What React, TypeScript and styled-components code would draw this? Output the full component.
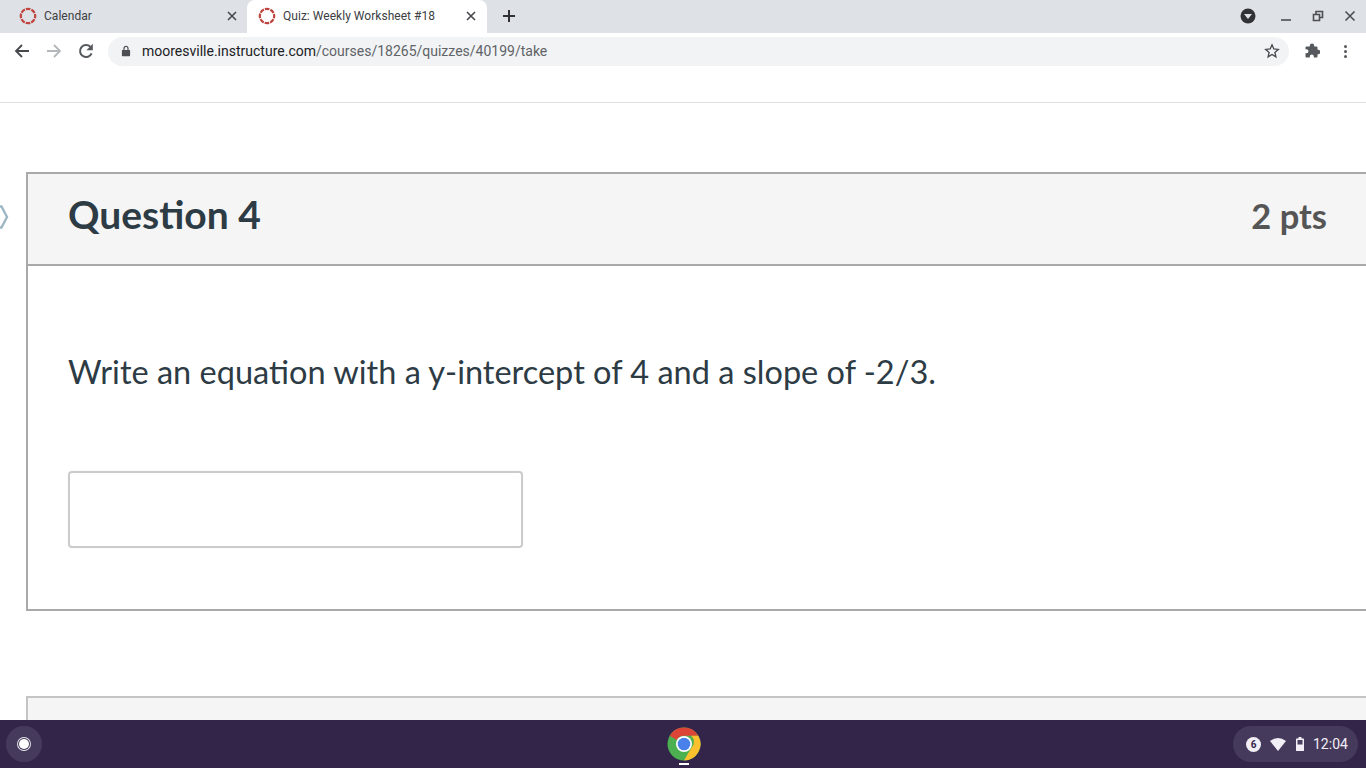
import React from 'react';
import styled, { createGlobalStyle } from 'styled-components';

const GlobalStyle = createGlobalStyle`
    html, body {
        margin: 0;
        padding: 0;
        height: 100%;
        overflow: hidden;
        background: #fff;
    }
`;

const CanvasLogo = () => (
    <svg width="18" height="18" viewBox="0 0 18 18">
        <circle cx="9" cy="9" r="7.200" fill="none" stroke="#c0433d" strokeWidth="2.200" strokeDasharray="4.600 1.050" strokeDashoffset="2.300" />
    </svg>
);

const CloseIcon = () => (
    <svg width="12" height="12" viewBox="0 0 12 12">
        <path d="M2 2l8 8M10 2l-8 8" stroke="#45484c" strokeWidth="1.600" fill="none" />
    </svg>
);

const ChromeLogo = () => (
    <svg width="34" height="34" viewBox="0 0 34 34">
        <circle cx="17" cy="17" r="16.500" fill="#4caf50" />
        <path d="M17 .5a16.500 16.500 0 0 1 14.300 8.250H17a8.250 8.250 0 0 0-7.150 4.130L2.700 8.750A16.500 16.500 0 0 1 17 .5z" fill="#db4437" />
        <path d="M31.300 8.750A16.500 16.500 0 0 1 17 33.500l7.150-12.370a8.250 8.250 0 0 0 0-12.380z" fill="#fbc02d" />
        <circle cx="17" cy="17" r="8" fill="#fff" />
        <circle cx="17" cy="17" r="6.300" fill="#4a80ea" />
    </svg>
);

const App = () => {
    return (
        <Screen>
            <GlobalStyle />
            <TabStrip>
                <Tab>
                    <CanvasLogo />
                    <TabTitle>Calendar</TabTitle>
                    <TabClose><CloseIcon /></TabClose>
                </Tab>
                <Tab $active>
                    <CanvasLogo />
                    <TabTitle>Quiz: Weekly Worksheet #18</TabTitle>
                    <TabClose><CloseIcon /></TabClose>
                </Tab>
                <NewTab>
                    <svg width="14" height="14" viewBox="0 0 14 14">
                        <path d="M7 1v12M1 7h12" stroke="#2f3134" strokeWidth="2" fill="none" />
                    </svg>
                </NewTab>
                <WindowControls>
                    <ProfileButton>
                        <svg width="16" height="16" viewBox="0 0 16 16">
                            <circle cx="8" cy="8" r="7.500" fill="#303236" />
                            <path d="M4 6h8l-4 5z" fill="#dee1e6" />
                        </svg>
                    </ProfileButton>
                    <WindowButton>
                        <svg width="12" height="12" viewBox="0 0 12 12">
                            <path d="M1 10h10" stroke="#4b4e52" strokeWidth="1.600" fill="none" />
                        </svg>
                    </WindowButton>
                    <WindowButton>
                        <svg width="12" height="12" viewBox="0 0 12 12">
                            <path d="M1.500 4.500h6v6h-6zM4 4.500V1.500h6.500v6H7.500" stroke="#4b4e52" strokeWidth="1.600" fill="none" />
                        </svg>
                    </WindowButton>
                    <WindowButton>
                        <svg width="12" height="12" viewBox="0 0 12 12">
                            <path d="M1.500 1.500l9 9M10.500 1.500l-9 9" stroke="#4b4e52" strokeWidth="1.600" fill="none" />
                        </svg>
                    </WindowButton>
                </WindowControls>
            </TabStrip>

            <Toolbar>
                <NavButton>
                    <svg width="16" height="16" viewBox="0 0 16 16">
                        <path d="M15 8H2M8 2L2 8l6 6" stroke="#45484c" strokeWidth="1.800" fill="none" />
                    </svg>
                </NavButton>
                <NavButton>
                    <svg width="16" height="16" viewBox="0 0 16 16">
                        <path d="M1 8h13M8 2l6 6-6 6" stroke="#b4b7bb" strokeWidth="1.800" fill="none" />
                    </svg>
                </NavButton>
                <NavButton>
                    <svg width="16" height="16" viewBox="0 0 16 16">
                        <path d="M13.600 10.300A6 6 0 1 1 12.300 3.800" stroke="#55585c" strokeWidth="2" fill="none" />
                        <path d="M14.800 .8v6.400H8.400z" fill="#55585c" />
                    </svg>
                </NavButton>
                <Omnibox>
                    <svg width="10" height="12" viewBox="0 0 10 12">
                        <path d="M1.500 5h7a.6.6 0 0 1 .6.6v5a.6.6 0 0 1-.6.6h-7a.6.6 0 0 1-.6-.6v-5a.6.6 0 0 1 .6-.6z" fill="#4b4e52" />
                        <path d="M3 5V3.400a2 2 0 0 1 4 0V5" stroke="#4b4e52" strokeWidth="1.200" fill="none" />
                    </svg>
                    <Url>
                        <UrlHost>mooresville.instructure.com</UrlHost>/courses/18265/quizzes/40199/take
                    </Url>
                    <StarIcon>
                        <svg width="16" height="16" viewBox="0 0 16 16">
                            <path d="M8 1.800l1.800 4.200 4.500.4-3.400 3 1 4.400L8 11.500l-3.900 2.300 1-4.400-3.400-3 4.500-.4z" stroke="#45484c" strokeWidth="1.300" fill="none" />
                        </svg>
                    </StarIcon>
                </Omnibox>
                <ToolbarEnd>
                    <svg width="16" height="16" viewBox="0 0 16 16">
                        <path d="M5.800 2.700a2.200 2.200 0 0 1 4.400 0V3.500h2.300a1 1 0 0 1 1 1v2.300h.6a2.200 2.200 0 0 1 0 4.400h-.6v2.300a1 1 0 0 1-1 1h-2.700v-1a2 2 0 0 0-4 0v1H2.500a1 1 0 0 1-1-1v-3.300h1a2 2 0 0 0 0-4h-1V4.500a1 1 0 0 1 1-1h3.300z" fill="#55585c" />
                    </svg>
                    <MenuDots>
                        <span /><span /><span />
                    </MenuDots>
                </ToolbarEnd>
            </Toolbar>

            <Page>
                <PageTop />
                <SideChevron>
                    <svg width="9" height="26" viewBox="0 0 9 26">
                        <path d="M-1 2.500h2.500l5.500 10.500-5.500 10.500H-1" stroke="#9db8c4" strokeWidth="2.400" fill="none" />
                    </svg>
                </SideChevron>
                <QuestionCard>
                    <QuestionHeader>
                        <QuestionName>Question 4</QuestionName>
                        <Points>2 pts</Points>
                    </QuestionHeader>
                    <QuestionBody>
                        <QuestionText>Write an equation with a y-intercept of 4 and a slope of -2/3.</QuestionText>
                        <AnswerBox />
                    </QuestionBody>
                </QuestionCard>
                <NextCard />
            </Page>

            <Shelf>
                <Launcher><LauncherDot /></Launcher>
                <ShelfCenter>
                    <ChromeLogo />
                    <RunningMark />
                </ShelfCenter>
                <StatusTray>
                    <Badge>6</Badge>
                    <svg width="16" height="14" viewBox="0 0 16 14">
                        <path d="M0 4Q8-2 16 4L8 14z" fill="#f1eff5" />
                    </svg>
                    <svg width="8" height="14" viewBox="0 0 8 14">
                        <path d="M2.500 0h3v1.500H7.500a.5.5 0 0 1 .5.5v11.500a.5.500 0 0 1-.5.500h-7a.5.500 0 0 1-.5-.5V2a.5.500 0 0 1 .5-.5h2z" fill="#f1eff5" />
                        <rect x="1.500" y="3" width="5" height="4.500" fill="#4b3f63" />
                    </svg>
                    <Clock>12:04</Clock>
                </StatusTray>
            </Shelf>
        </Screen>
    );
};

const Screen = styled.div`
    width: 1366px;
    height: 768px;
    display: flex;
    flex-direction: column;
    overflow: hidden;
    background: #fff;
    font-family: Roboto, "Liberation Sans", sans-serif;
`;

const TabStrip = styled.div`
    height: 33px;
    flex: none;
    display: flex;
    align-items: flex-end;
    padding-left: 8px;
    background: #dee1e6;
`;

const Tab = styled.div<{ $active?: boolean }>`
    width: ${p => (p.$active ? '240px' : '239px')};
    height: ${p => (p.$active ? '33px' : '32px')};
    box-sizing: border-box;
    display: flex;
    align-items: center;
    gap: 7px;
    padding: ${p => (p.$active ? '0 10px 1px 11px' : '0 9px 2px 11px')};
    border-radius: 8px 8px 0 0;
    background: ${p => (p.$active ? '#fff' : 'transparent')};
`;

const TabTitle = styled.span`
    flex: 1;
    font-size: 12px;
    letter-spacing: 0.03px;
    color: #3c4043;
    white-space: nowrap;
`;

const TabClose = styled.span`
    display: flex;
`;

const NewTab = styled.div`
    width: 44px;
    height: 33px;
    box-sizing: border-box;
    padding-bottom: 2px;
    display: flex;
    align-items: center;
    justify-content: center;
`;

const WindowControls = styled.div`
    margin-left: auto;
    height: 33px;
    box-sizing: border-box;
    padding-bottom: 2px;
    display: flex;
    align-items: center;
`;

const ProfileButton = styled.div`
    display: flex;
    margin-right: 14px;
`;

const WindowButton = styled.div`
    width: 32px;
    display: flex;
    justify-content: center;
`;

const Toolbar = styled.div`
    height: 36px;
    flex: none;
    display: flex;
    align-items: center;
    padding-left: 6px;
    background: #fff;
`;

const NavButton = styled.div`
    width: 32px;
    display: flex;
    justify-content: center;
`;

const Omnibox = styled.div`
    width: 1181px;
    height: 29px;
    margin-left: 6px;
    box-sizing: border-box;
    display: flex;
    align-items: center;
    padding: 0 9px 0 13px;
    border-radius: 15px;
    background: #f1f3f4;
`;

const Url = styled.div`
    flex: 1;
    margin-left: 11px;
    font-size: 14px;
    color: #5f6368;
    white-space: nowrap;
`;

const UrlHost = styled.span`
    color: #202124;
`;

const StarIcon = styled.span`
    display: flex;
`;

const ToolbarEnd = styled.div`
    display: flex;
    align-items: center;
    gap: 24px;
    margin-left: 15px;
`;

const MenuDots = styled.div`
    display: flex;
    flex-direction: column;
    gap: 2px;

    span {
        width: 3px;
        height: 3px;
        border-radius: 50%;
        background: #55585c;
    }
`;

const Page = styled.main`
    position: relative;
    flex: 1;
    min-height: 0;
    overflow: hidden;
    background: #fff;
    font-family: Lato, "Open Sans", sans-serif;
`;

const PageTop = styled.div`
    height: 33px;
    border-bottom: 1px solid #dfdfdf;
`;

const SideChevron = styled.div`
    position: absolute;
    left: 0;
    top: 135px;
    display: flex;
`;

const QuestionCard = styled.section`
    margin: 69px 0 0 26px;
    box-sizing: border-box;
    border: 2px solid #a9a9a9;
    border-right: 0;
`;

const QuestionHeader = styled.header`
    height: 90px;
    box-sizing: border-box;
    display: flex;
    align-items: center;
    justify-content: space-between;
    padding: 0 39px 11px 40px;
    background: #f5f5f5;
`;

const QuestionName = styled.h2`
    margin: 0;
    font-size: 39px;
    font-weight: 700;
    color: #2d3b45;
`;

const Points = styled.div`
    margin-top: 3px;
    font-size: 34.500px;
    font-weight: 700;
    color: #555;
`;

const QuestionBody = styled.div`
    height: 345px;
    box-sizing: border-box;
    border-top: 2px solid #a9a9a9;
    padding: 85px 0 0 40px;
`;

const QuestionText = styled.p`
    margin: 0;
    font-size: 32.500px;
    line-height: 41px;
    color: #2d3b45;
`;

const AnswerBox = styled.div`
    width: 455px;
    height: 77px;
    margin-top: 79px;
    box-sizing: border-box;
    border: 2px solid #cbcbcb;
    border-radius: 4px;
    box-shadow: 0 0 2px rgba(0, 0, 0, 0.05);
`;

const NextCard = styled.section`
    margin: 85px 0 0 26px;
    height: 100px;
    box-sizing: border-box;
    border: 2px solid #c4c4c4;
    border-right: 0;
    background: #f5f5f5;
`;

const Shelf = styled.footer`
    position: relative;
    height: 48px;
    flex: none;
    display: flex;
    align-items: center;
    justify-content: center;
    background: #33244a;
`;

const Launcher = styled.div`
    position: absolute;
    left: 6px;
    top: 6px;
    width: 36px;
    height: 36px;
    display: flex;
    align-items: center;
    justify-content: center;
    border-radius: 50%;
    background: #463a5c;
`;

const LauncherDot = styled.div`
    width: 10px;
    height: 10px;
    border-radius: 50%;
    background: #fff;
    box-shadow: 0 0 0 1px #463a5c, 0 0 0 2px #e6e3eb;
`;

const ShelfCenter = styled.div`
    position: relative;
    display: flex;
    margin-right: -2px;
`;

const RunningMark = styled.div`
    position: absolute;
    left: 12px;
    bottom: -4px;
    width: 10px;
    height: 2px;
    background: #fff;
`;

const StatusTray = styled.div`
    position: absolute;
    right: 8px;
    top: 6px;
    height: 36px;
    width: 125px;
    box-sizing: border-box;
    display: flex;
    align-items: center;
    gap: 10px;
    padding-left: 13px;
    border-radius: 18px;
    background: #463a5c;
`;

const Badge = styled.div`
    width: 15px;
    height: 15px;
    margin-right: -1px;
    display: flex;
    align-items: center;
    justify-content: center;
    border-radius: 50%;
    background: #f1eff5;
    color: #33244a;
    font-size: 10px;
    font-weight: 700;
`;

const Clock = styled.div`
    font-size: 14px;
    color: #f1eff5;
    margin-left: -1px;
`;

export default App;
